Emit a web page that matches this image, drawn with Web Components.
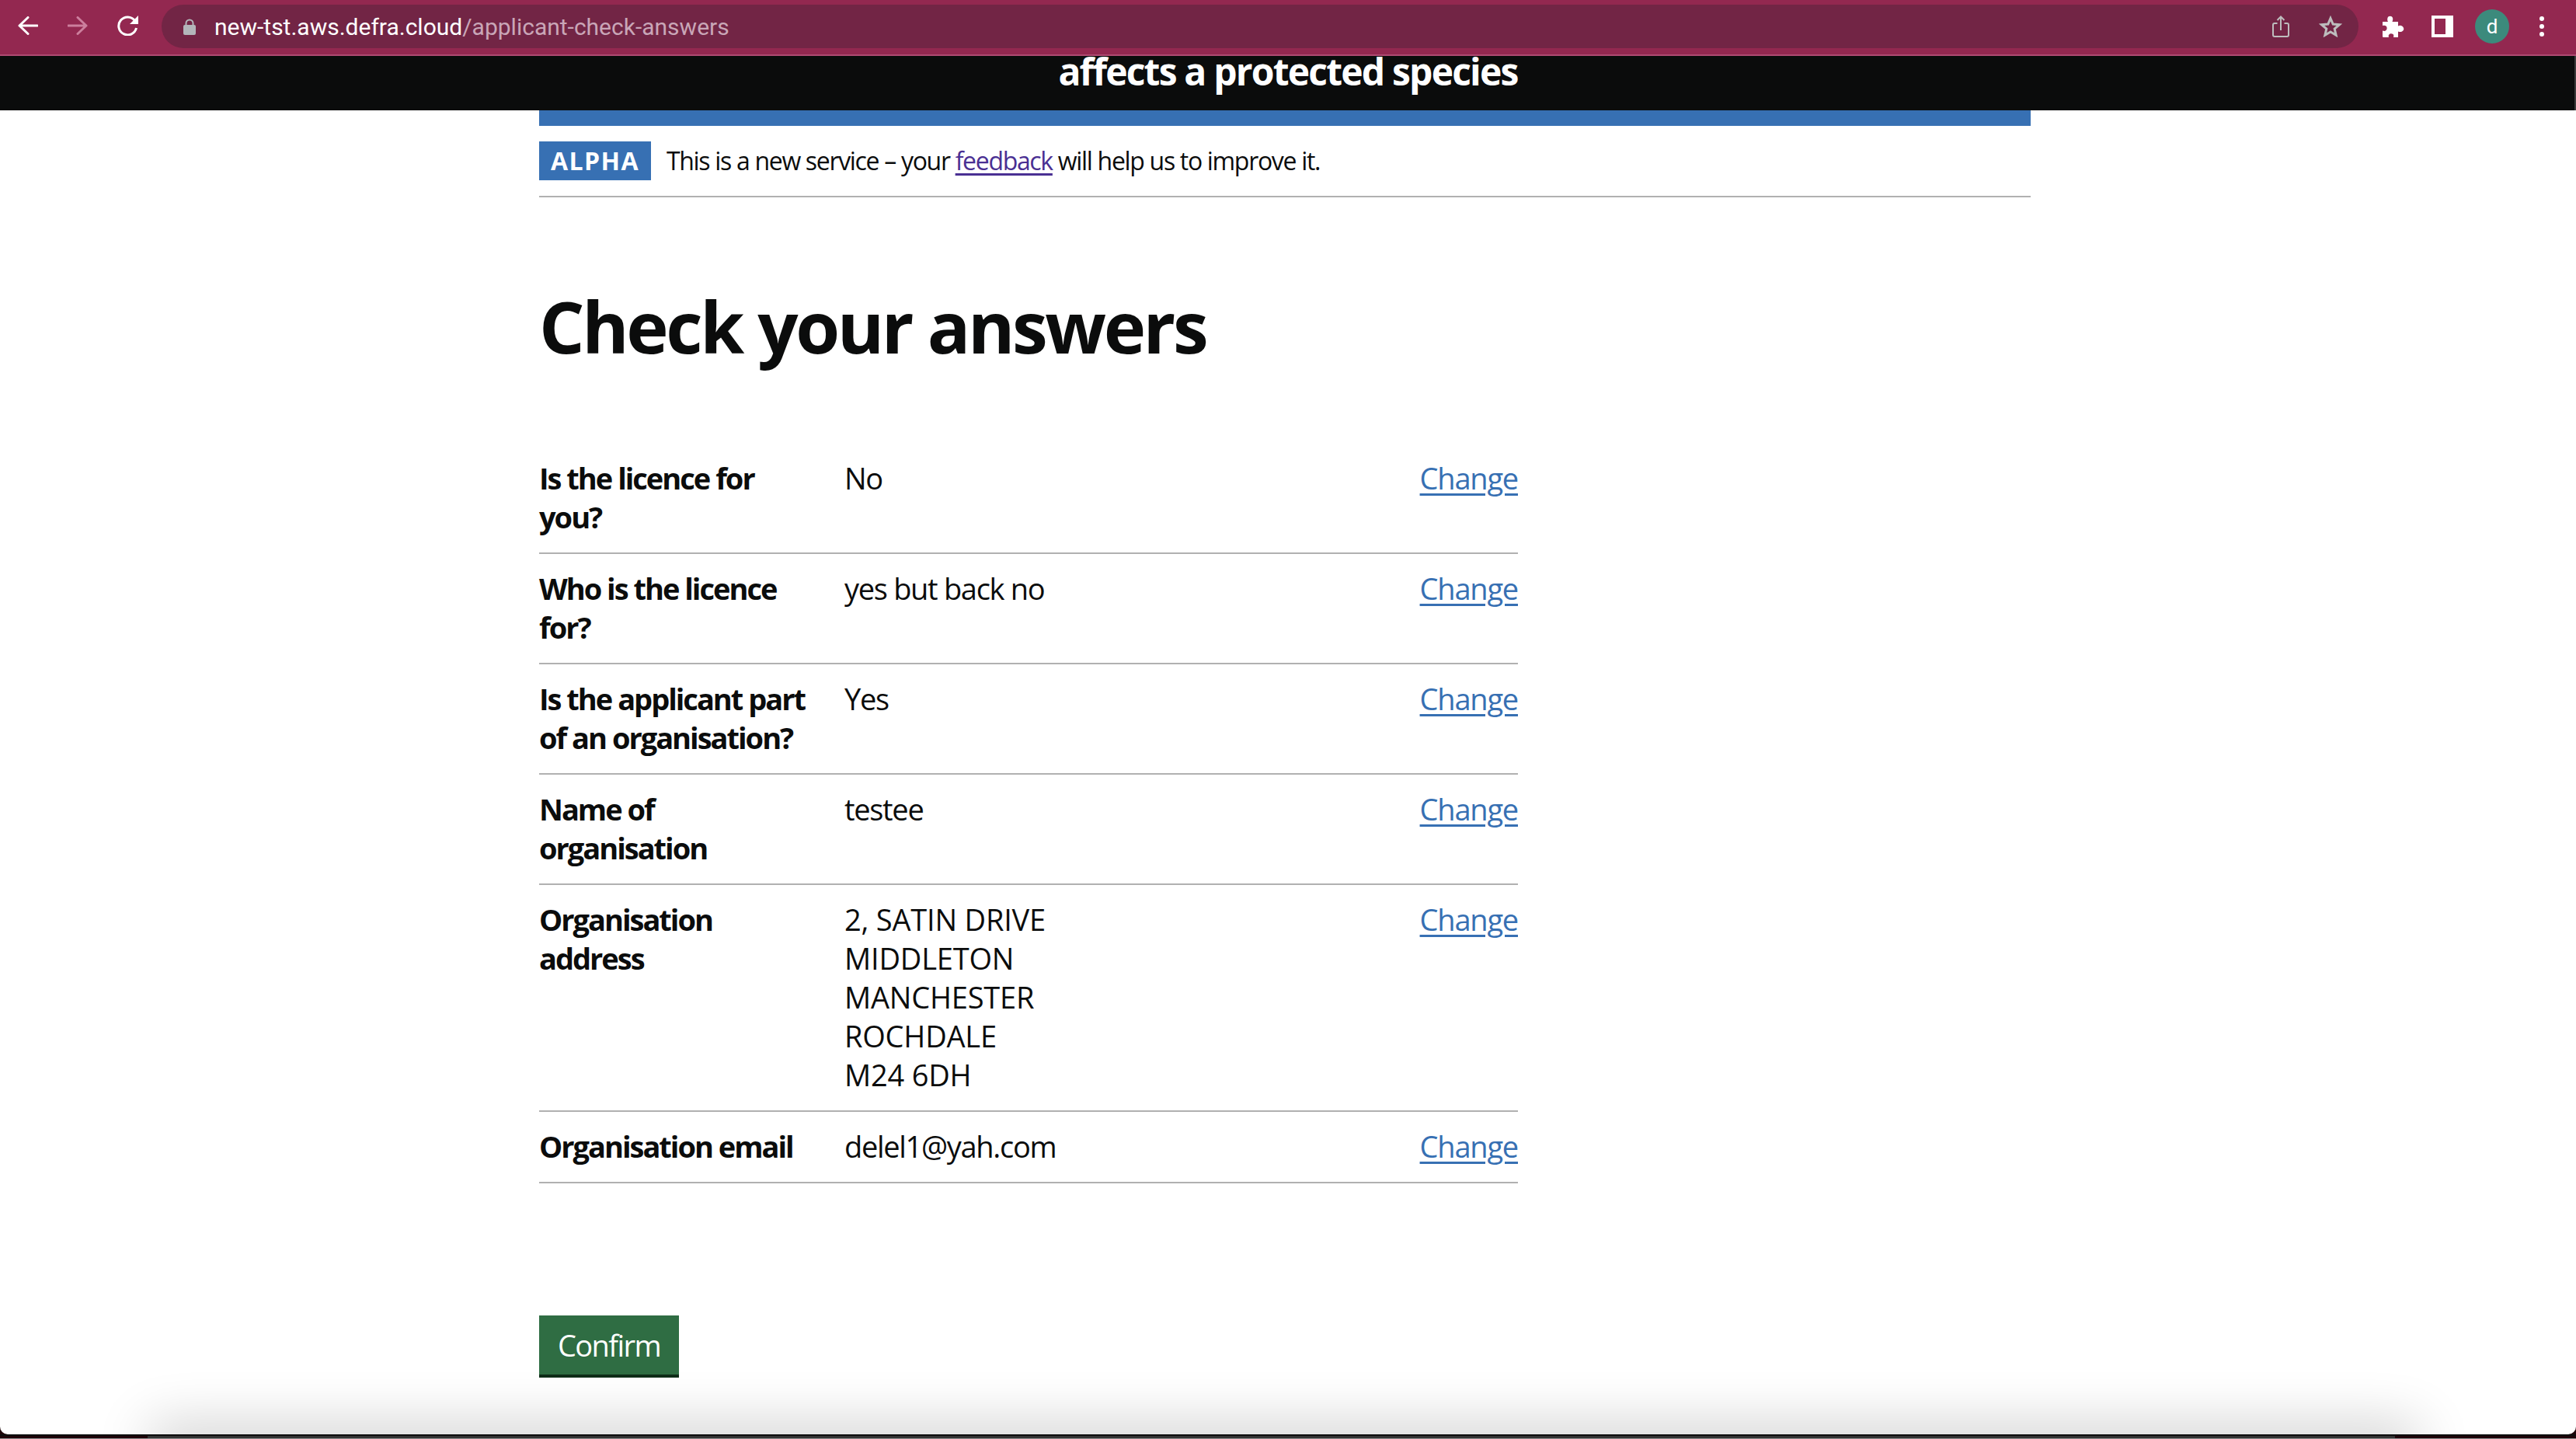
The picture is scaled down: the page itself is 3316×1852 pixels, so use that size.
<!DOCTYPE html>
<html lang="en">
<head>
<meta charset="utf-8">
<title>Check your answers</title>
<style>
    html, body { margin: 0; height: 100%; background: #1e0509; }
    body {
        display: flex;
        flex-direction: column;
        height: 1852px;
        overflow: hidden;
        font-family: "Open Sans", "Noto Sans", sans-serif;
        color: #0b0c0c;
    }
</style>
</head>
<body>
<browser-toolbar url-host="new-tst.aws.defra.cloud" url-path="/applicant-check-answers"></browser-toolbar>
<page-window>
    <site-header>affects a protected species</site-header>
    <phase-banner tag="ALPHA">This is a new service – your <a href="#" style="color:#4a3093;text-decoration-thickness:3px;text-underline-offset:4px">feedback</a> will help us to improve it.</phase-banner>
    <page-main>
        <h1 slot="title">Check your answers</h1>
        <summary-list>
            <summary-row><span slot="key">Is the licence for<br>you?</span>No</summary-row>
            <summary-row><span slot="key">Who is the licence<br>for?</span>yes but back no</summary-row>
            <summary-row><span slot="key">Is the applicant part<br>of an organisation?</span>Yes</summary-row>
            <summary-row><span slot="key">Name of<br>organisation</span>testee</summary-row>
            <summary-row><span slot="key">Organisation<br>address</span><span style="letter-spacing:-.2px">2, SATIN DRIVE<br>MIDDLETON<br>MANCHESTER<br>ROCHDALE<br>M24 6DH</span></summary-row>
            <summary-row><span slot="key">Organisation email</span>delel1@yah.com</summary-row>
        </summary-list>
        <confirm-button>Confirm</confirm-button>
    </page-main>
</page-window>
<window-edge></window-edge>

<script>
const FONT = '"Open Sans", "Noto Sans", sans-serif';

class BrowserToolbar extends HTMLElement {
    connectedCallback() {
        this.attachShadow({ mode: 'open' });
        this.shadowRoot.innerHTML = `
            <style>
                :host {
                    display: flex;
                    align-items: flex-start;
                    position: relative;
                    z-index: 1;
                    flex: none;
                    height: 70px;
                    border-bottom: 2px solid #b04a72;
                    background: #932850;
                }
                .nav { display: flex; align-items: center; height: 66px; padding-left: 23px; gap: 38px; }
                .omni {
                    display: flex;
                    align-items: center;
                    width: 2828px;
                    height: 56px;
                    margin: 6px 0 0 29px;
                    border-radius: 28px;
                    background: #722545;
                    font: 30px Roboto, sans-serif;
                    color: #fff;
                }
                .lock { margin-left: 28px; margin-right: 24px; }
                .path { color: #c9a6b7; }
                .omni-icons { display: flex; align-items: center; gap: 38px; margin-left: auto; padding-right: 21px; }
                .ext { display: flex; align-items: center; height: 68px; margin-left: 30px; }
                .avatar {
                    width: 44px;
                    height: 44px;
                    margin: 0 39px 0 28px;
                    border-radius: 50%;
                    background: #3c8a7c;
                    color: #fff;
                    font: 26px/44px Roboto, sans-serif;
                    text-align: center;
                }
                .side { margin-left: 35px; }
                svg { display: block; flex: none; }
            </style>
            <div class="nav">
                <svg width="26" height="24" viewBox="0 0 26 24" fill="none" stroke="#fff" stroke-width="3" stroke-linecap="round" stroke-linejoin="round"><path d="M25 12H2M13 1.500 2 12l11 10.500"/></svg>
                <svg width="26" height="24" viewBox="0 0 26 24" fill="none" stroke="#cc7f9d" stroke-width="3" stroke-linecap="round" stroke-linejoin="round"><path d="M1 12h23M13 1.500 24 12 13 22.500"/></svg>
                <svg width="28" height="26" viewBox="0 0 28 26" fill="none"><path d="M22.500 6.500A11.500 11.500 0 1 0 24.500 16" stroke="#fff" stroke-width="3"/><path d="M27 0v11H16z" fill="#fff"/></svg>
            </div>
            <div class="omni">
                <svg class="lock" width="16" height="21" viewBox="0 0 16 21" fill="none"><path d="M3.500 9V6a4.500 4.500 0 0 1 9 0v3" stroke="#b3b6ba" stroke-width="2"/><rect y="8" width="16" height="13" rx="2" fill="#b3b6ba"/></svg>
                <span>${this.getAttribute('url-host')}<span class="path">${this.getAttribute('url-path')}</span></span>
                <div class="omni-icons">
                    <svg width="22" height="28" viewBox="0 0 22 28" fill="none" stroke="#bdbdbd" stroke-width="2"><path d="M6.500 10H3a2 2 0 0 0-2 2v13a2 2 0 0 0 2 2h16a2 2 0 0 0 2-2V12a2 2 0 0 0-2-2h-3.500M11 19V2M6.500 6 11 1.500 15.500 6"/></svg>
                    <svg width="30" height="28" viewBox="0 0 30 28" fill="none" stroke="#bdbdbd" stroke-width="3"><path d="M15 3.500 18.200 11l8.300.7-6.300 5.400 1.900 8.100L15 20.900l-7.100 4.300 1.900-8.100-6.300-5.400 8.300-.7z"/></svg>
                </div>
            </div>
            <div class="ext">
                <svg width="29" height="28" viewBox="0 0 29 28" fill="#fff"><path d="M1 8h7c-1-2-1-3-.5-5 .8-2.800 5.500-3 6.500 0 .5 2 .2 3-.5 5H21v5.500c2-1 3.500-1 5 0 3 2 3 5.500 0 7-1.500.8-3 .8-5 0V28h-6c.6-2 .4-3-.5-4-2-1.500-4.500-1-5.500 1-.5 1-.4 2 0 3H2.500C1.500 28 1 27.500 1 26.500v-7c2 .6 3.200.6 4.500-.5 1.500-1.500 1.500-4 0-5.500C4 12.500 3 12.500 1 13z"/></svg>
                <svg class="side" width="28" height="28" viewBox="0 0 28 28"><path fill="#fff" fill-rule="evenodd" d="M0 0h28v28H0zM4 4v20h14V4z"/></svg>
                <div class="avatar">d</div>
                <svg width="6" height="26" viewBox="0 0 6 26" fill="#fff"><circle cx="3" cy="3" r="3"/><circle cx="3" cy="13" r="3"/><circle cx="3" cy="23" r="3"/></svg>
            </div>
        `;
    }
}

class PageWindow extends HTMLElement {
    connectedCallback() {
        this.attachShadow({ mode: 'open' });
        this.shadowRoot.innerHTML = `
            <style>
                :host {
                    display: block;
                    position: relative;
                    flex: none;
                    height: 1774px;
                    border-radius: 0 0 10px 10px;
                    background: #fff;
                }
                .clip {
                    position: absolute;
                    inset: 0;
                    overflow: hidden;
                    border-radius: 0 0 10px 10px;
                    pointer-events: none;
                }
                .dock-shadow {
                    position: absolute;
                    left: 205px;
                    right: 215px;
                    bottom: -30px;
                    height: 30px;
                    box-shadow: 0 0 70px 12px rgba(0, 0, 0, .2);
                }
            </style>
            <slot></slot>
            <div class="clip"><div class="dock-shadow"></div></div>
        `;
    }
}

class SiteHeader extends HTMLElement {
    connectedCallback() {
        this.attachShadow({ mode: 'open' });
        this.shadowRoot.innerHTML = `
            <style>
                :host {
                    display: block;
                    height: 70px;
                    background: #0b0c0c;
                    box-shadow: inset -2px 0 0 #3a3a3a;
                    color: #fff;
                    font: 700 48px/40px ${FONT};
                    letter-spacing: -1.8px;
                    text-align: center;
                }
            </style>
            <slot></slot>
        `;
    }
}

class PhaseBanner extends HTMLElement {
    connectedCallback() {
        this.attachShadow({ mode: 'open' });
        this.shadowRoot.innerHTML = `
            <style>
                :host {
                    display: flex;
                    align-items: center;
                    box-sizing: border-box;
                    width: 1920px;
                    height: 112px;
                    margin-left: 694px;
                    border-top: 20px solid #3770b3;
                    border-bottom: 2px solid #b1b1b1;
                    font: 32px/50px ${FONT};
                    letter-spacing: -1.32px;
                }
                .tag {
                    width: 144px;
                    height: 50px;
                    margin-right: 20px;
                    background: #3770b3;
                    color: #fff;
                    font-weight: 700;
                    letter-spacing: 1.4px;
                    text-align: center;
                }
            </style>
            <div class="tag">${this.getAttribute('tag')}</div>
            <div><slot></slot></div>
        `;
    }
}

class PageMain extends HTMLElement {
    connectedCallback() {
        this.attachShadow({ mode: 'open' });
        this.shadowRoot.innerHTML = `
            <style>
                :host {
                    display: block;
                    width: 1260px;
                    margin-left: 694px;
                    padding-top: 116px;
                }
                ::slotted(h1) {
                    margin: 0 0 101px;
                    font: 700 92px/100px ${FONT};
                    letter-spacing: -3.4px;
                    white-space: nowrap;
                }
            </style>
            <slot name="title"></slot>
            <slot></slot>
        `;
    }
}

class SummaryList extends HTMLElement {
    connectedCallback() {
        this.attachShadow({ mode: 'open' });
        this.shadowRoot.innerHTML = `
            <style>
                :host { display: block; margin-bottom: 170px; }
            </style>
            <slot></slot>
        `;
    }
}

class SummaryRow extends HTMLElement {
    connectedCallback() {
        this.attachShadow({ mode: 'open' });
        this.shadowRoot.innerHTML = `
            <style>
                :host {
                    display: grid;
                    grid-template-columns: 393px 1fr auto;
                    padding: 19px 0 21px;
                    border-bottom: 2px solid #b1b1b1;
                    font: 38px/50px ${FONT};
                    letter-spacing: -1.3px;
                }
                .key { font-weight: 700; letter-spacing: -2px; white-space: nowrap; }
                a { color: #3770b3; letter-spacing: -1.2px; text-decoration-thickness: 3px; text-underline-offset: 5px; }
            </style>
            <div class="key"><slot name="key"></slot></div>
            <div><slot></slot></div>
            <div><a href="#">Change</a></div>
        `;
    }
}

class ConfirmButton extends HTMLElement {
    connectedCallback() {
        this.attachShadow({ mode: 'open' });
        this.shadowRoot.innerHTML = `
            <style>
                :host { display: block; }
                button {
                    display: block;
                    box-sizing: border-box;
                    width: 180px;
                    height: 80px;
                    padding: 0;
                    border: 0;
                    border-bottom: 4px solid #0f2d18;
                    background: #2f6d43;
                    color: #fff;
                    font: 38px/50px ${FONT};
                    letter-spacing: -1.6px;
                }
            </style>
            <button type="button"><slot></slot></button>
        `;
    }
}

class WindowEdge extends HTMLElement {
    connectedCallback() {
        this.attachShadow({ mode: 'open' });
        this.shadowRoot.innerHTML = `
            <style>
                :host {
                    display: block;
                    flex: none;
                    height: 3px;
                    border-top: 2px solid #0d0d0d;
                    border-bottom: 1px solid #8d8d8d;
                    background: #1e0509;
                }
                .dock { height: 100%; margin: 0 233px 0 190px; background: #333; }
            </style>
            <div class="dock"></div>
        `;
    }
}

customElements.define('browser-toolbar', BrowserToolbar);
customElements.define('page-window', PageWindow);
customElements.define('site-header', SiteHeader);
customElements.define('phase-banner', PhaseBanner);
customElements.define('page-main', PageMain);
customElements.define('summary-list', SummaryList);
customElements.define('summary-row', SummaryRow);
customElements.define('confirm-button', ConfirmButton);
customElements.define('window-edge', WindowEdge);
</script>
</body>
</html>
